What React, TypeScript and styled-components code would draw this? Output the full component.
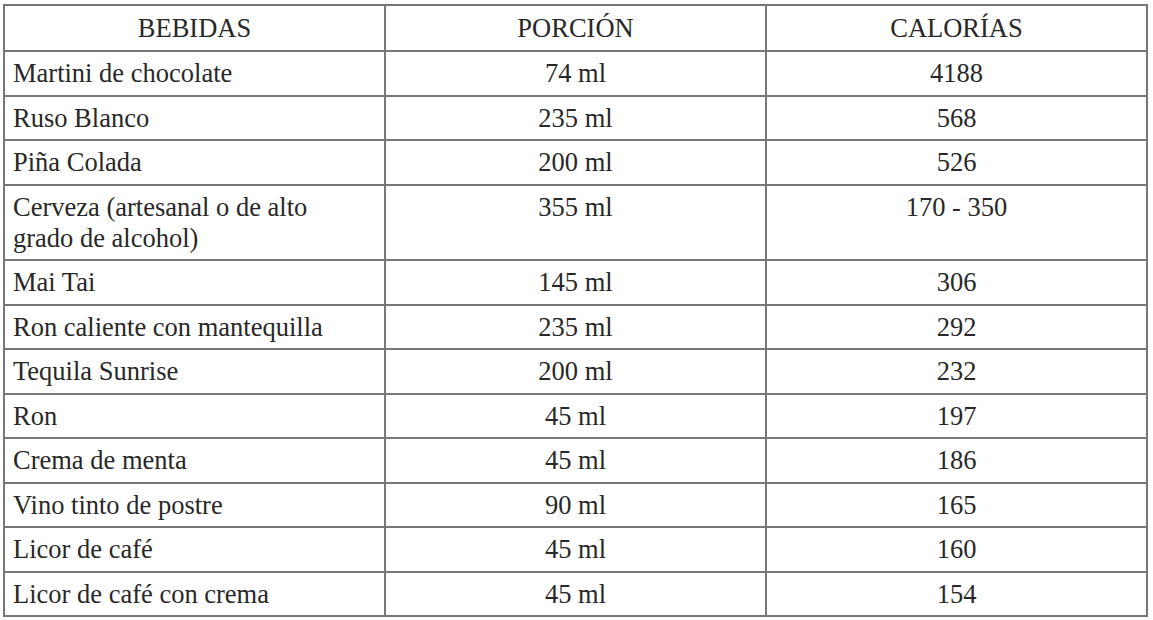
import React from "react"
import styled, { createGlobalStyle } from "styled-components"

interface Bebida {
    nombre: string
    porcion: string
    calorias: string
}

const bebidas: Bebida[] = [
    { nombre: "Martini de chocolate", porcion: "74 ml", calorias: "4188" },
    { nombre: "Ruso Blanco", porcion: "235 ml", calorias: "568" },
    { nombre: "Piña Colada", porcion: "200 ml", calorias: "526" },
    {
        nombre: "Cerveza (artesanal o de alto grado de alcohol)",
        porcion: "355 ml",
        calorias: "170 - 350"
    },
    { nombre: "Mai Tai", porcion: "145 ml", calorias: "306" },
    { nombre: "Ron caliente con mantequilla", porcion: "235 ml", calorias: "292" },
    { nombre: "Tequila Sunrise", porcion: "200 ml", calorias: "232" },
    { nombre: "Ron", porcion: "45 ml", calorias: "197" },
    { nombre: "Crema de menta", porcion: "45 ml", calorias: "186" },
    { nombre: "Vino tinto de postre", porcion: "90 ml", calorias: "165" },
    { nombre: "Licor de café", porcion: "45 ml", calorias: "160" },
    { nombre: "Licor de café con crema", porcion: "45 ml", calorias: "154" }
]

const GlobalStyle = createGlobalStyle`
    html, body {
        margin: 0;
        padding: 0;
        background: #fff;
    }
`

const SCxPage = styled.div`
    width: 1153px;
    height: 620px;
    padding: 4px 0 0 3px;
    box-sizing: border-box;
    background: #fff;
`

const SCxTable = styled.table`
    width: 1145px;
    border-collapse: collapse;
    table-layout: fixed;
    font-family: "Liberation Serif", "DejaVu Serif", serif;
    font-size: 26.5px;
    color: #282828;
`

const SCxCell = styled.td<{ $align?: "left" | "center" }>`
    border: 2px solid #777;
    padding: 6px 8px 5.5px 8px;
    line-height: 31px;
    vertical-align: top;
    text-align: ${props => props.$align ?? "center"};
`

const SCxHead = styled.th`
    border: 2px solid #777;
    padding: 7px 8px 6.4px;
    line-height: 31px;
    font-weight: normal;
    text-align: center;
`

const SCxName = styled.div`
    max-width: 340px;
`

export default function App() {
    return (
        <>
            <GlobalStyle />
            <SCxPage>
                <SCxTable>
                    <thead>
                        <tr>
                            <SCxHead>BEBIDAS</SCxHead>
                            <SCxHead>PORCIÓN</SCxHead>
                            <SCxHead>CALORÍAS</SCxHead>
                        </tr>
                    </thead>
                    <tbody>
                        {bebidas.map(item => (
                            <tr key={item.nombre}>
                                <SCxCell $align="left">
                                    <SCxName>{item.nombre}</SCxName>
                                </SCxCell>
                                <SCxCell>{item.porcion}</SCxCell>
                                <SCxCell>{item.calorias}</SCxCell>
                            </tr>
                        ))}
                    </tbody>
                </SCxTable>
            </SCxPage>
        </>
    )
}
